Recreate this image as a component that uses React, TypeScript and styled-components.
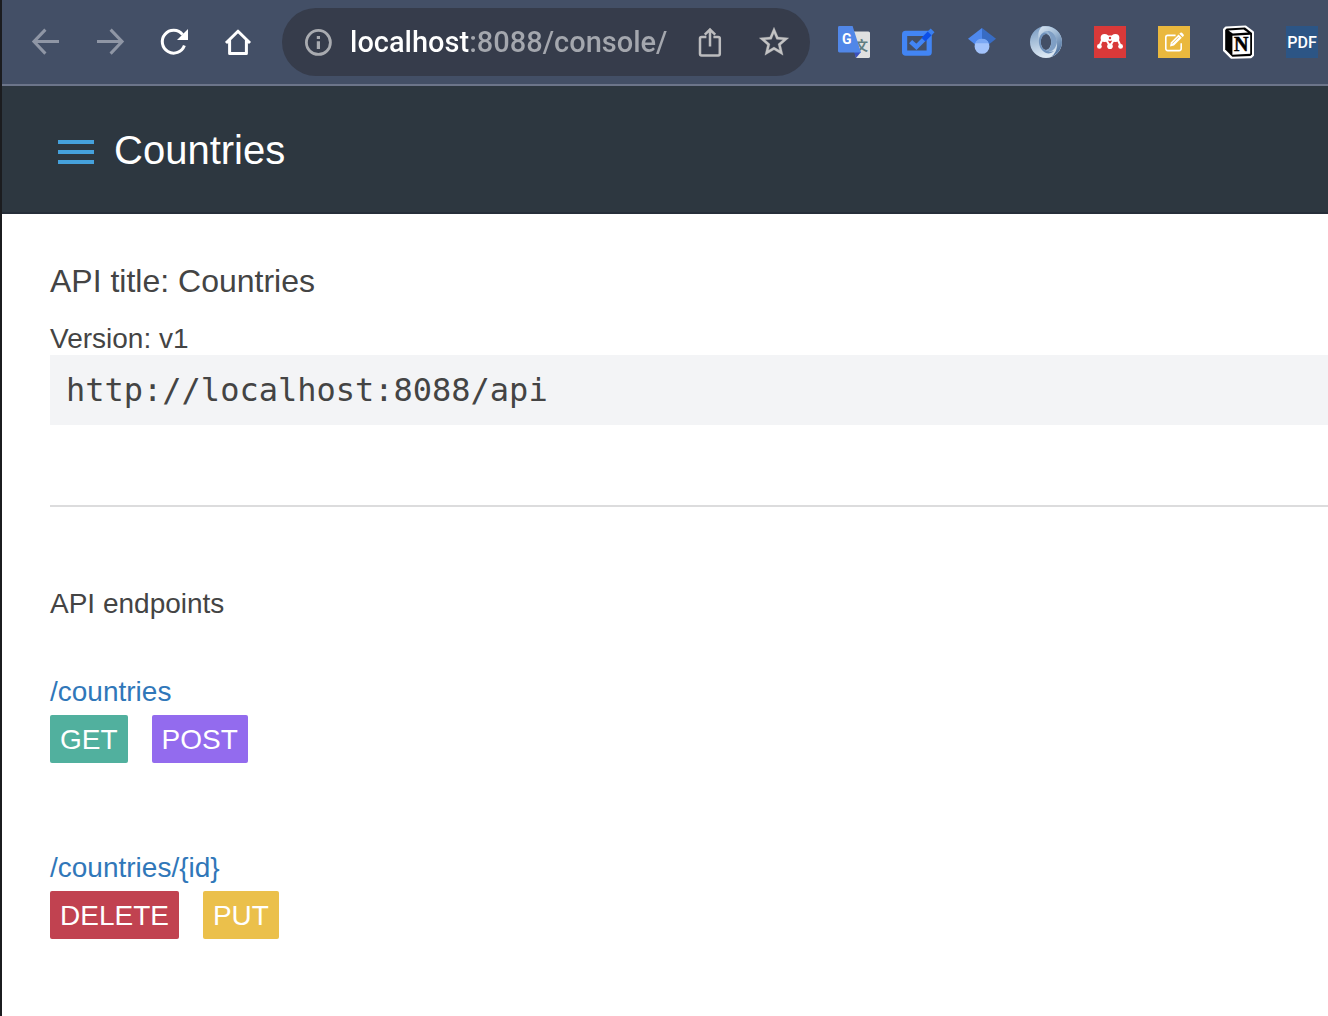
import React from "react";
import styled, { createGlobalStyle } from "styled-components";

const sans = '"Liberation Sans", Arial, sans-serif';
const mono = '"DejaVu Sans Mono", Menlo, monospace';
const chrome = 'Roboto, "Noto Sans", sans-serif';

const GlobalStyle = createGlobalStyle`
  *, *::before, *::after { box-sizing: border-box; }
  body { margin: 0; background: #fff; }
  h1, h2, h3, p, ul { margin: 0; padding: 0; font-weight: 400; }
`;

const Window = styled.div`
  min-height: 100vh;
  border-left: 2px solid #1b1c1f;
  background: #fff;
  color: #444;
  font-family: ${sans};
  font-size: 28px;
  line-height: 32px;
  overflow: hidden;
`;

const BrowserBar = styled.div`
  display: flex;
  align-items: center;
  gap: 28px;
  padding: 8px 10px 8px 28px;
  background: #434f66;
  border-bottom: 2px solid #6c758a;
`;

const IconGroup = styled.div`
  display: flex;
  align-items: center;
  gap: 32px;
`;

const IconButton = styled.button<{ $color?: string }>`
  flex: none;
  display: block;
  width: 32px;
  height: 32px;
  padding: 0;
  border: 0;
  background: none;
  color: ${(p) => p.$color ?? "#fff"};
  cursor: pointer;
  svg { display: block; overflow: visible; }
`;

const AddressBar = styled.form`
  flex: 1;
  min-width: 0;
  display: flex;
  align-items: center;
  gap: 16px;
  height: 68px;
  padding: 0 20px;
  border-radius: 34px;
  background: #363c4b;
`;

const AddressInput = styled.input`
  flex: 1;
  min-width: 0;
  height: 40px;
  padding: 0;
  border: 0;
  outline: 0;
  font: 500 29px/40px ${chrome};
  color: #b1b3b9;
  background: linear-gradient(to right, #fff 120px, #a4a7ae 120px);
  -webkit-background-clip: text;
  background-clip: text;
  -webkit-text-fill-color: transparent;
`;

const AppHeader = styled.header`
  display: flex;
  align-items: center;
  gap: 20px;
  height: 128px;
  padding: 2px 56px 0;
  background: #2d3740;
  border-bottom: 2px solid #262e39;
`;

const MenuButton = styled.button`
  display: grid;
  gap: 6px;
  width: 36px;
  padding: 4px 0 0;
  border: 0;
  background: none;
  cursor: pointer;
`;

const MenuLine = styled.span`
  height: 4px;
  background: #45a1dc;
`;

const AppTitle = styled.h1`
  font-size: 40px;
  line-height: 48px;
  color: #fff;
`;

const Main = styled.main`
  padding: 47px 0 77px 48px;
`;

const ApiTitle = styled.h2`
  font-size: 32px;
  line-height: 40px;
  margin-bottom: 22px;
`;

const BaseUri = styled.pre`
  margin: 0;
  padding: 15px 16px;
  background: #f3f4f6;
  font: 32px/40px ${mono};
`;

const Divider = styled.hr`
  margin: 80px 0 81px;
  border: 0;
  border-top: 2px solid #dcdcdd;
`;

const SectionTitle = styled.h3`
  font-size: 28px;
  line-height: 32px;
  margin-bottom: 56px;
`;

const Endpoints = styled.ul`
  display: grid;
  gap: 89px;
  list-style: none;
`;

const Endpoint = styled.li`
  display: grid;
  justify-items: start;
  gap: 7px;
`;

const EndpointLink = styled.a`
  color: #3077b9;
  text-decoration: none;
`;

const Methods = styled.div`
  display: flex;
  gap: 24px;
`;

const Method = styled.button<{ $bg: string }>`
  height: 48px;
  padding: 2px 10px 0;
  border: 0;
  border-radius: 2px;
  background: ${(p) => p.$bg};
  color: #fff;
  font: 28px/46px ${sans};
  cursor: pointer;
`;

const Icon = ({ children }: { children: React.ReactNode }) => (
  <svg width="32" height="32" viewBox="0 0 32 32" fill="none" aria-hidden="true">
    {children}
  </svg>
);

const BackIcon = () => (
  <Icon><path d="M29 15.6H4.5M15.4 3.6 3.9 15.6l11.500 12" stroke="currentColor" strokeWidth="3" /></Icon>
);
const ForwardIcon = () => (
  <Icon><path d="M3 15.6h24.5M16.600 3.6l11.500 12-11.500 12" stroke="currentColor" strokeWidth="3" /></Icon>
);
const ReloadIcon = () => (
  <Icon>
    <path d="M24.6 8.6A11.4 11.4 0 1 0 26.4 19.6" stroke="currentColor" strokeWidth="3" />
    <path d="M30 3v11H19z" fill="currentColor" />
  </Icon>
);
const HomeIcon = () => (
  <Icon>
    <path d="M4 17 16 5.2 28 17M7.6 14v13.4h16.8V14" stroke="currentColor" strokeWidth="3" strokeLinejoin="round" />
  </Icon>
);
const InfoIcon = () => (
  <Icon>
    <circle cx="16.4" cy="16.4" r="12" stroke="currentColor" strokeWidth="2.8" />
    <path d="M14.8 10h3.2v3h-3.2zM14.8 15.2h3.2V23h-3.2z" fill="currentColor" />
  </Icon>
);
const ShareIcon = () => (
  <Icon>
    <path
      d="M12.4 11H7.6a1.6 1.6 0 0 0-1.6 1.6v15.2a1.6 1.6 0 0 0 1.6 1.6h16.6a1.6 1.6 0 0 0 1.6-1.6V12.6a1.6 1.6 0 0 0-1.6-1.6h-4.8M16 20.4V4M10.8 8.6 16 3.6l5.2 5"
      stroke="currentColor"
      strokeWidth="2.5"
    />
  </Icon>
);
const StarIcon = () => (
  <Icon>
    <path
      transform="translate(-1.64 -1.64) scale(1.47)"
      fill="currentColor"
      stroke="currentColor"
      strokeWidth="0.2"
      d="M22 9.24l-7.19-.62L12 2 9.19 8.63 2 9.24l5.46 4.73L5.82 21 12 17.27 18.18 21l-1.63-7.03L22 9.24zM12 15.4l-3.76 2.27 1-4.28-3.32-2.88 4.38-.38L12 6.1l1.71 4.04 4.38.38-3.32 2.88 1 4.28L12 15.4z"
    />
  </Icon>
);

const TranslateIcon = () => (
  <Icon>
    <path d="M14 5.4h16.4a1.6 1.6 0 0 1 1.6 1.6v23.4a1.6 1.6 0 0 1-1.6 1.6H18z" fill="#dfe0e0" />
    <text x="17" y="24" fontSize="13" fontWeight="700" fill="#607d80" fontFamily='"Noto Sans CJK SC", sans-serif'>文</text>
    <path d="M16 26h7l-5 6z" fill="#3a50bd" />
    <path d="M1.4 0H14.6l8.4 26.4H1.4A1.4 1.4 0 0 1 0 25V1.4A1.4 1.4 0 0 1 1.4 0z" fill="#5187e8" />
    <text x="4" y="18" fontSize="14" fontWeight="700" fill="#fff" fontFamily="Roboto, sans-serif">G</text>
  </Icon>
);
const TasksIcon = () => (
  <Icon>
    <rect x="2.6" y="7.4" width="24.6" height="19.8" rx="1" stroke="#4285f4" strokeWidth="5.2" />
    <path d="m8.6 15.6 5.8 5.2 9-9" stroke="#4285f4" strokeWidth="4.6" />
    <path d="m21.4 13.6 8-8" stroke="#0c4fe8" strokeWidth="5.4" />
    <path d="m27.6 7.4 3-3" stroke="#3b80ee" strokeWidth="5.4" />
  </Icon>
);
const ScholarIcon = () => (
  <Icon>
    <path d="M16 24 2 12.7 16 2z" fill="#4f89ee" />
    <path d="m16 24 14-11.3L16 2z" fill="#386cc4" />
    <circle cx="16" cy="20.4" r="7.4" fill="#a3c3fb" />
    <path d="M9.2 17.2a7.4 7.4 0 0 1 13.6 0z" fill="#7ba8f4" />
  </Icon>
);
const RingIcon = () => (
  <Icon>
    <defs>
      <linearGradient id="ringBase" x1="0" y1="0" x2="0.3" y2="1">
        <stop offset="0" stopColor="#7195bf" />
        <stop offset="0.5" stopColor="#a9c1da" />
        <stop offset="1" stopColor="#dbe7f3" />
      </linearGradient>
      <linearGradient id="ringArm" x1="0" y1="0" x2="0.6" y2="1">
        <stop offset="0" stopColor="#dbe7f3" />
        <stop offset="0.5" stopColor="#9db8d4" />
        <stop offset="1" stopColor="#52749f" />
      </linearGradient>
    </defs>
    <path
      d="M16 0a16 16 0 1 1 0 32a16 16 0 1 1 0-32zM16 8c-3 0-5.200 4-5.200 8s2.200 8 5.200 8 5.200-4 5.200-8-2.200-8-5.200-8z"
      fill="url(#ringBase)"
      fillRule="evenodd"
    />
    <path
      d="M12 .6C22 -1.800 32 6 32 16c0 7-5 13-11 15 4-3 6.500-8 6-14C26.500 9 22 4.800 17 5c-4 .2-7.500 4-8 10C7.500 9 8.500 3.500 12 .6z"
      fill="url(#ringArm)"
    />
    <path d="M21.200 16c0 5-2.200 8-5.200 8 6 4 10-2 11-8-.6-6-4-10.500-9.500-11C20 8 21.200 12 21.200 16z" fill="#7f9fc5" />
    <path d="M16 24c-3 0-5.200-4-5.200-8S13 8 16 8c1-.2 1.500-.2 2 0-3-3-8-1-9 6-.6 5 2 11 7 13 3 1 6 0 8-2-3 1-6 .5-8-1z" fill="#6d8fb9" />
  </Icon>
);
const MendeleyIcon = () => (
  <Icon>
    <path d="M0 0h32v32H0z" fill="#d93939" />
    <path d="M5.4 20 9 12M16 20l-5-8M16 20l5-8M23 12l3.600 8" stroke="#fff" strokeWidth="2" />
    <path d="M9 9.600h14v4L16 15l-7-1.400z" fill="#fff" />
    <g fill="#fff">
      <circle cx="10.6" cy="12" r="4" />
      <circle cx="21.4" cy="12" r="4" />
      <circle cx="5.4" cy="20.4" r="2.4" />
      <circle cx="16" cy="20.2" r="2.8" />
      <circle cx="26.6" cy="20.4" r="2.4" />
    </g>
    <circle cx="16" cy="12" r="1.2" fill="#d93939" />
  </Icon>
);
const NoteIcon = () => (
  <Icon>
    <path d="M0 0h32v32H0z" fill="#eab83e" />
    <path d="M17.6 9.4H9.8a2 2 0 0 0-2 2v11.2a2 2 0 0 0 2 2h11.4a2 2 0 0 0 2-2v-5.4" stroke="#fff" strokeWidth="1.6" />
    <path d="m12 20.4.8-4L20.6 8.6l3.2 3.2-7.8 7.8z" fill="#fff" />
    <path d="m21.4 7.8 1-1a1.2 1.2 0 0 1 1.6 0l1.6 1.6a1.2 1.2 0 0 1 0 1.6l-1 1z" fill="#fff" />
    <path d="m14.2 17.6 6.4-6.4" stroke="#eab83e" strokeWidth="0.8" />
  </Icon>
);
const NotionIcon = () => (
  <Icon>
    <path d="M4 1.600 23.500.8l7.300 5.400v23l-1.800 1.800-19.500.6L2.200 24.500V3.600z" fill="#fff" stroke="#fff" strokeWidth="2.4" strokeLinejoin="round" />
    <path d="M4.600 2.600 23 1.600l7 5.400v21.400l-1.600 1.600-18 .8-7.200-7.200V4z" fill="#000" />
    <path d="M6.400 4.600 21.500 3.500l4.500 3-15.200 1z" fill="#fff" />
    <path d="m10.400 9.800 17.800-1v19l-17.800 1z" fill="#fff" />
    <text x="19.2" y="25.4" fontSize="20" fontWeight="700" textAnchor="middle" fill="#000" stroke="#000" strokeWidth="0.5" fontFamily='"Liberation Serif", serif'>N</text>
  </Icon>
);
const PdfIcon = () => (
  <Icon>
    <path d="M0 0h32v32H0z" fill="#2c5585" />
    <text x="16" y="22" fontSize="16" fontWeight="500" textAnchor="middle" fill="#fff" fontFamily="Roboto, sans-serif">PDF</text>
  </Icon>
);

const navigation = [
  { label: "Back", color: "#8f96a5", Glyph: BackIcon },
  { label: "Forward", color: "#8f96a5", Glyph: ForwardIcon },
  { label: "Reload", color: "#fff", Glyph: ReloadIcon },
  { label: "Home", color: "#fff", Glyph: HomeIcon },
];

const extensions = [
  { label: "Translate", Glyph: TranslateIcon },
  { label: "Tasks", Glyph: TasksIcon },
  { label: "Scholar", Glyph: ScholarIcon },
  { label: "JSON viewer", Glyph: RingIcon },
  { label: "Mendeley", Glyph: MendeleyIcon },
  { label: "Notes", Glyph: NoteIcon },
  { label: "Notion", Glyph: NotionIcon },
  { label: "PDF", Glyph: PdfIcon },
];

const methodColors: Record<string, string> = {
  GET: "#51b09e",
  POST: "#936bee",
  DELETE: "#c14250",
  PUT: "#ebc04b",
};

const endpoints = [
  { path: "/countries", methods: ["GET", "POST"] },
  { path: "/countries/{id}", methods: ["DELETE", "PUT"] },
];

export default function App() {
  return (
    <Window>
      <GlobalStyle />
      <BrowserBar>
        <IconGroup>
          {navigation.map(({ label, color, Glyph }) => (
            <IconButton key={label} aria-label={label} $color={color}><Glyph /></IconButton>
          ))}
        </IconGroup>
        <AddressBar onSubmit={(e) => e.preventDefault()}>
          <IconButton type="button" aria-label="Site information" $color="#a9abb0"><InfoIcon /></IconButton>
          <AddressInput aria-label="Address" defaultValue="localhost:8088/console/" />
          <IconGroup>
            <IconButton type="button" aria-label="Share" $color="#bcbcbe"><ShareIcon /></IconButton>
            <IconButton type="button" aria-label="Bookmark" $color="#c3c3c4"><StarIcon /></IconButton>
          </IconGroup>
        </AddressBar>
        <IconGroup>
          {extensions.map(({ label, Glyph }) => (
            <IconButton key={label} aria-label={label}><Glyph /></IconButton>
          ))}
        </IconGroup>
      </BrowserBar>
      <AppHeader>
        <MenuButton aria-label="Menu">
          <MenuLine />
          <MenuLine />
          <MenuLine />
        </MenuButton>
        <AppTitle>Countries</AppTitle>
      </AppHeader>
      <Main>
        <ApiTitle>API title: Countries</ApiTitle>
        <p>Version: v1</p>
        <BaseUri>http://localhost:8088/api</BaseUri>
        <Divider />
        <SectionTitle>API endpoints</SectionTitle>
        <Endpoints>
          {endpoints.map(({ path, methods }) => (
            <Endpoint key={path}>
              <EndpointLink href={"#" + path}>{path}</EndpointLink>
              <Methods>
                {methods.map((m) => (
                  <Method key={m} $bg={methodColors[m]}>{m}</Method>
                ))}
              </Methods>
            </Endpoint>
          ))}
        </Endpoints>
      </Main>
    </Window>
  );
}
